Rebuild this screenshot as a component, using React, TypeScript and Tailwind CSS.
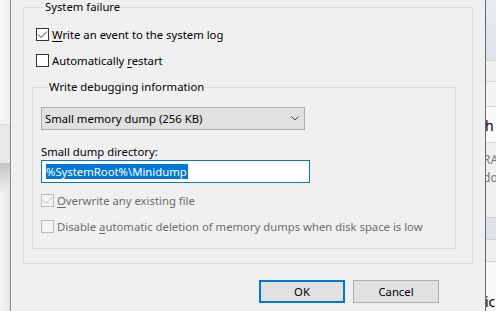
import React from "react";

const font = { fontFamily: '"Noto Sans", "Open Sans", sans-serif' };

function Check({ checked, disabled }: { checked?: boolean; disabled?: boolean }) {
  return (
    <div
      className={
        "w-[13px] h-[13px] shrink-0 border flex items-center justify-center " +
        (disabled ? "border-[#bcbcbc] bg-[#f4f4f4]" : "border-[#333333] bg-white")
      }
    >
      {checked && (
        <svg width="11" height="11" viewBox="0 0 11 11">
          <path
            d="M1 5.5 L4 8.5 L10 2.5"
            fill="none"
            stroke={disabled ? "#bcbcbc" : "#333333"}
            strokeWidth="1"
          />
        </svg>
      )}
    </div>
  );
}

function CheckRow({
  checked,
  disabled,
  children,
  className = "",
}: {
  checked?: boolean;
  disabled?: boolean;
  children: React.ReactNode;
  className?: string;
}) {
  return (
    <div className={"flex items-center h-[17px] gap-[3px] " + className}>
      <Check checked={checked} disabled={disabled} />
      <span className={"text-[11.3px] leading-[16px] whitespace-nowrap " + (disabled ? "text-[#6d6d6d]" : "text-black")}>
        {children}
      </span>
    </div>
  );
}

export default function App() {
  return (
    <div className="w-[496px] h-[311px] flex overflow-hidden bg-[#f0f0f0]" style={font}>
      {/* left background window */}
      <div className="w-[10px] h-full flex flex-col shrink-0">
        <div className="h-[125px] bg-gradient-to-r from-[#f6f6f6] to-[#efefef] border-b border-[#d9d9d9]" />
        <div className="h-[38px] bg-[#e8e8e8]" />
        <div className="h-[28px] bg-gradient-to-b from-[#c4c4c4] to-[#ededed]" />
        <div className="flex-1 bg-gradient-to-r from-[#f4f4f4] to-[#e6e6e6]" />
      </div>

      {/* dialog */}
      <div className="w-[476px] h-full shrink-0 border-l border-r border-l-[#8c8c8c] border-r-[#6a6a6a] bg-[#f0f0f0] flex flex-col px-[12px]">
        <fieldset className="border border-[#dcdcdc] pl-[12px] pr-[16px] pb-[14px] w-[450px] -mt-[1px]">
          <legend className="ml-[8px] px-[1px] text-[11.3px] leading-[16px] text-black">System failure</legend>
          <CheckRow checked className="mt-[11px]">
            <u className="underline-offset-2">W</u>rite an event to the system log
          </CheckRow>
          <CheckRow className="mt-[9px]">
            Automatically <u className="underline-offset-2">r</u>estart
          </CheckRow>

          <fieldset className="border border-[#dcdcdc] mt-[10px] -ml-[4px] w-[424px] pl-[8px] pb-[13px]">
            <legend className="ml-[7px] px-[1px] text-[11.3px] leading-[16px] text-black">Write debugging information</legend>
            <div className="mt-[12px] w-[264px] h-[23px] border border-[#adadad] bg-[#e1e1e1] flex items-center pl-[3px] pr-[5px]">
              <span className="flex-1 text-[11.3px] leading-[16px] text-black whitespace-nowrap">Small memory dump (256 KB)</span>
              <svg width="8" height="5" viewBox="0 0 8 5">
                <path d="M0.5 0.5 L4 4 L7.5 0.5" fill="none" stroke="#444" strokeWidth="1" />
              </svg>
            </div>
            <div className="mt-[14px] h-[16px] text-[11.3px] leading-[16px] text-black">Small dump directory:</div>
            <div className="w-[269px] h-[23px] border border-[#0078d7] bg-white flex items-center pl-[4px]">
              <span className="bg-[#0078d7] text-white text-[11.3px] leading-[15px] whitespace-nowrap pr-[1px]">%SystemRoot%\Minidump</span>
            </div>
            <CheckRow checked disabled className="mt-[9px]">
              <u className="underline-offset-2">O</u>verwrite any existing file
            </CheckRow>
            <CheckRow disabled className="mt-[9px]">
              Disable <u className="underline-offset-2">a</u>utomatic deletion of memory dumps when disk space is low
            </CheckRow>
          </fieldset>
        </fieldset>

        <div className="mt-[16px] flex justify-end gap-[8px] pr-[34px]">
          <button className="w-[86px] h-[23px] border-2 border-[#0078d7] bg-[#e1e1e1] text-[11.3px] leading-[16px] text-black">
            OK
          </button>
          <button className="w-[86px] h-[23px] border border-[#adadad] bg-[#e1e1e1] text-[11.3px] leading-[16px] text-black">
            Cancel
          </button>
        </div>
      </div>

      {/* right background window */}
      <div className="w-[10px] h-full flex flex-col shrink-0 overflow-hidden">
        <div className="h-[61px] bg-gradient-to-b from-[#e9ecef] to-[#dfe3e8] border-b border-[#d2d2d2]" />
        <div className="h-[21px] bg-[#f0f0f0] border-b border-[#d8d8d8]" />
        <div className="h-[25px] bg-[#f4f4f4] border-b border-[#d8d8d8]" />
        <div className="h-[36px] bg-[#fafafa] border-b border-[#d8d8d8] flex items-center pt-[3px]">
          <span className="text-[14px] leading-[16px] text-black -ml-[1px]">h</span>
        </div>
        <div className="h-[75px] bg-[#f0f0f0] border-b border-[#d0d0d0] flex flex-col pt-[8px]">
          <span className="text-[12px] leading-[18px] text-[#777] -ml-[3px] whitespace-nowrap">RA</span>
          <span className="text-[12px] leading-[18px] text-[#777] -ml-[3px] whitespace-nowrap">do</span>
        </div>
        <div className="h-[22px] bg-[#dfe3e8] border-b border-[#d0d0d0]" />
        <div className="h-[22px] bg-[#f0f0f0] border-b border-[#d0d0d0]" />
        <div className="flex-1 bg-[#f8f8f8] flex items-end pb-[1px]">
          <span className="text-[14px] leading-[16px] text-black -ml-[1px] whitespace-nowrap">ic</span>
        </div>
      </div>
    </div>
  );
}
